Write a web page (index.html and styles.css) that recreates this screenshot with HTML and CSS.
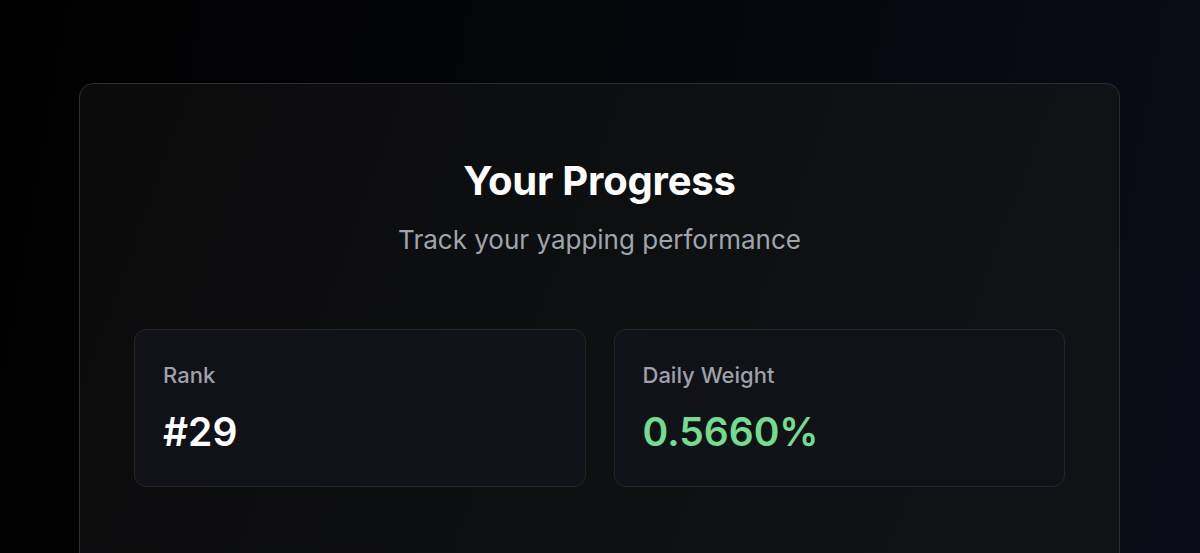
FILE: index.html
```html
<!DOCTYPE html>
<html lang="en">
<head>
  <meta charset="UTF-8" />
  <meta name="viewport" content="width=device-width, initial-scale=1.0"/>
  <title>Your Progress</title>
  <link rel="stylesheet" href="styles.css">
</head>
<body>
  <div class="page">
    <div class="panel">
      <h1>Your Progress</h1>
      <p class="subtitle">Track your yapping performance</p>

      <div class="stats">
        <div class="stat">
          <div class="stat-label">Rank</div>
          <div class="stat-value">#29</div>
        </div>
        <div class="stat">
          <div class="stat-label">Daily Weight</div>
          <div class="stat-value green">0.5660%</div>
        </div>
      </div>
    </div>
  </div>
</body>
</html>
```

FILE: styles.css
```css
html, body {
  height: 100%;
}
body {
  font-family: Inter, 'Noto Sans', sans-serif;
  background: linear-gradient(100deg, #000000 0%, #05060a 45%, #0a0d17 100%);
  margin: 0;
  padding: 0;
  color: #fff;
  overflow: hidden;
}
.page {
  padding: 83px 80px 0 79px;
}
.panel {
  height: 600px;
  background: linear-gradient(110deg, #0b0b0c 0%, #0e0f11 50%, #121317 100%);
  border: 1px solid #2c2d31;
  border-radius: 14px;
  padding: 71px 54px 0;
  box-sizing: border-box;
}
h1 {
  margin: 0;
  font-size: 40px;
  font-weight: 700;
  text-align: center;
  letter-spacing: -0.2px;
  line-height: 48px;
  padding-top: 2px;
}
.subtitle {
  margin: 17px 0 0;
  font-size: 26px;
  color: #a0a4ad;
  text-align: center;
  line-height: 36px;
}
.stats {
  margin-top: 71px;
  display: grid;
  grid-template-columns: 1fr 1fr;
  gap: 28px;
}
.stat {
  height: 158px;
  box-sizing: border-box;
  background: #101217;
  border: 1px solid #24262d;
  border-radius: 12px;
  padding: 31px 28px;
}
.stat-label {
  font-size: 22px;
  font-weight: 500;
  color: #9ea1aa;
  line-height: 28px;
}
.stat-value {
  margin-top: 19px;
  font-size: 39px;
  font-weight: 600;
  line-height: 47px;
  color: #fff;
}
.green {
  color: #72dd8c;
}
```
